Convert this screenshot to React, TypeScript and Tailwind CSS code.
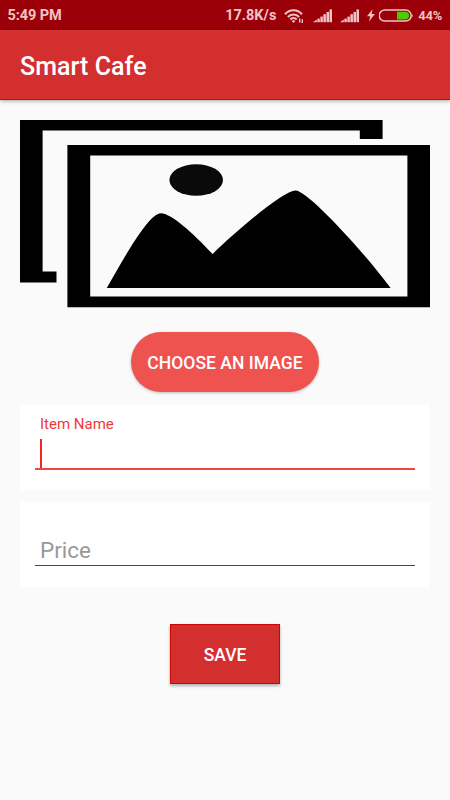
import { useState } from "react";

const SignalIcon = () => (
  <svg width="20" height="14" viewBox="0 0 20 14" fill="#f0c4c6">
    <path d="M0 13.2 L3.8 10.6 V13.2 Z" />
    <rect x="4.4" y="9.6" width="2.4" height="3.6" />
    <rect x="7.4" y="7.6" width="2.4" height="5.6" />
    <rect x="10.4" y="5.2" width="2.5" height="8" />
    <rect x="13.5" y="3" width="2.5" height="10.2" />
    <rect x="16.5" y="0.4" width="2.5" height="12.8" />
  </svg>
);

const WifiIcon = () => (
  <svg width="20" height="16" viewBox="0 0 20 16" fill="none" stroke="#f0c4c6" strokeWidth="2.1">
    <path d="M1 6.2 C5.6 0.9 13.4 0.9 18 6.2" />
    <path d="M3.9 9 C7 5.6 12 5.6 15.1 9" />
    <path d="M6.3 11.5 C8.2 9.4 10.8 9.4 12.7 11.5" />
    <path d="M7.6 12.9 Q9.5 11.5 11.4 12.9 L9.5 15 Z" fill="#f0c4c6" stroke="none" />
    <path d="M15.7 10.6 V14.4 M18.3 11.2 V15" strokeWidth="1.4" />
  </svg>
);

const BatteryIcon = () => (
  <svg width="35" height="14" viewBox="0 0 35 14">
    <rect x="0.2" y="1.1" width="32" height="11" rx="5.5" fill="none" stroke="#f0c4c6" strokeWidth="1.5" />
    <path d="M32.8 4.4 Q34.6 6.6 32.8 8.8 Z" fill="#f0c4c6" />
    <path d="M18 2.8 H26.8 A3.9 3.9 0 0 1 26.8 10.5 H18 Z" fill="#4ccb00" />
  </svg>
);

const StatusBar = () => (
  <div className="flex h-[30px] items-center bg-[#9b0009] pt-px pl-[7.5px] text-[14.5px] font-bold text-[#f0c4c6]">
    <span className="tracking-[-0.1px]">5:49 PM</span>
    <div className="ml-auto flex items-center pr-[8px]">
      <span className="mr-[8px]">17.8K/s</span>
      <WifiIcon />
      <span className="ml-[8.5px]"><SignalIcon /></span>
      <span className="ml-[7px]"><SignalIcon /></span>
      <svg className="ml-[7.5px]" width="8" height="13" viewBox="0 0 8 13" fill="#f0c4c6">
        <path d="M5.6 0.2 L0 7.2 H3.2 L2 12.6 L7.9 5.1 H4.6 Z" />
      </svg>
      <span className="ml-[4px]"><BatteryIcon /></span>
      <span className="ml-[4px] text-[13px] tracking-[-0.3px]">44%</span>
    </div>
  </div>
);

const ImagePlaceholder = () => (
  <svg className="block" width="410" height="188" viewBox="0 0 410 188">
    <path d="M0 0 H362.6 V19 H339.8 V10.5 H22.6 V151.6 H36.5 V162.4 H0 Z" />
    <path
      fillRule="evenodd"
      d="M47.4 25 H410 V187.2 H47.4 Z M70.2 35.5 V176.5 H387.4 V35.5 Z"
    />
    <ellipse cx="176.2" cy="60" rx="26.8" ry="15.8" fill="#0a0a0a" />
    <path d="M86.8 168 C105 136 129 93.2 140.8 93.2 C151 93.2 172 112 192.6 134 C217 110 264 70.4 275.6 70.4 C287 70.4 339 126 370.6 168 Z" />
  </svg>
);

const App = () => {
  const [name, setName] = useState("");
  const [price, setPrice] = useState("");

  return (
    <div className="h-[800px] w-[450px] overflow-hidden bg-[#fafafa] font-[Roboto,sans-serif]">
      {/* Header */}
      <StatusBar />
      <header className="flex h-[70px] items-center border-b border-[#c90808] bg-[#d32f2f] px-5 pt-1 shadow-[0_1px_4px_rgba(0,0,0,0.35)]">
        <h1 className="text-[25px] font-medium tracking-[0.05px] text-white">Smart Cafe</h1>
      </header>

      <main className="flex flex-col px-5 pt-5">
        <ImagePlaceholder />

        <button className="mt-[24px] h-[60px] w-[188px] self-center rounded-full bg-[#ef5350] pt-[3px] text-[17.5px] font-medium tracking-[0.04px] whitespace-nowrap text-white shadow-[0_1px_3px_rgba(0,0,0,0.25)]">
          CHOOSE AN IMAGE
        </button>

        {/* Item form */}
        <div className="mt-[13px] flex h-[84.5px] flex-col bg-white px-[15px] pt-[9px]">
          <label htmlFor="name" className="pl-[5px] text-[15px] leading-[20px] text-[#f03a37]">
            Item Name
          </label>
          <div className="mt-[5px] flex h-[31px] border-b-2 border-[#f04542] pl-[5px]">
            <span className="h-[29px] w-[2px] bg-[#f52521]" />
            <input
              id="name"
              className="w-full bg-transparent text-[22.5px] outline-none"
              value={name}
              onChange={(e) => setName(e.target.value)}
            />
          </div>
        </div>

        <div className="mt-[12.5px] h-[84.5px] bg-white px-[15px] pt-[32px]">
          <input
            className="block h-[32px] w-full border-b border-[#484848] pt-[2px] pl-[5px] text-[22.5px] outline-none placeholder:text-[#999999]"
            placeholder="Price"
            value={price}
            onChange={(e) => setPrice(e.target.value)}
          />
        </div>

        <button className="mt-[37.5px] h-[60px] w-[110px] self-center border border-[#cc0404] bg-[#d32f2f] pt-[2px] text-[17.5px] font-medium text-white shadow-[0_2px_3px_rgba(0,0,0,0.3)]">
          SAVE
        </button>
      </main>
    </div>
  );
};

export default App;
